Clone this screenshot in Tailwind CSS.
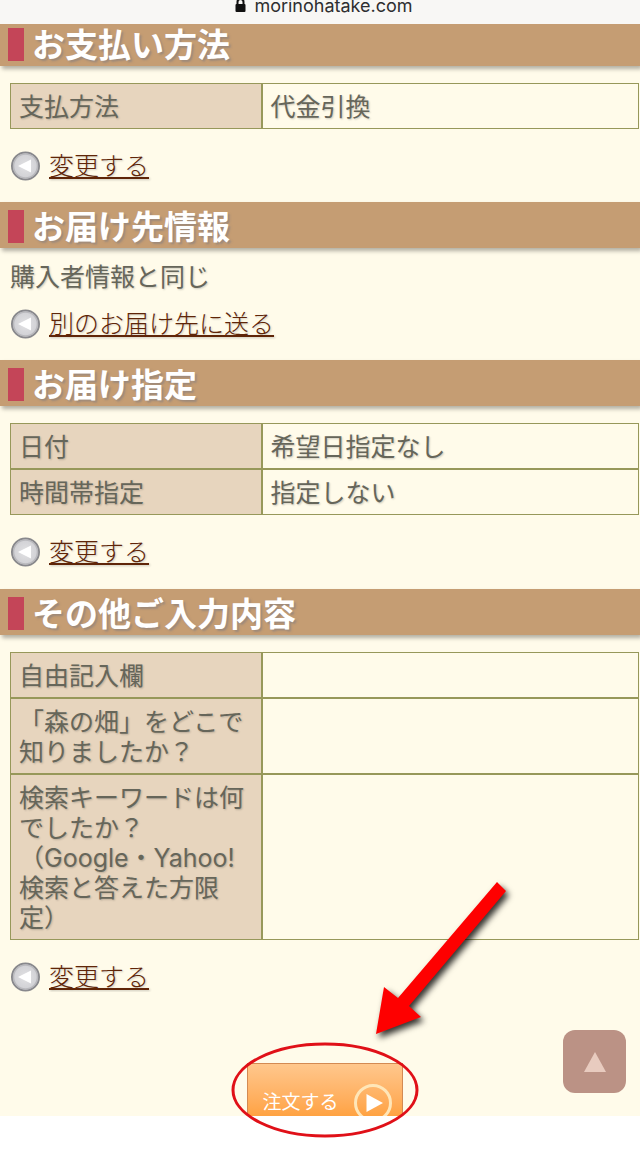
<!DOCTYPE html>
<html lang="ja">
<head>
  <meta charset="UTF-8">
  <meta name="viewport" content="width=device-width, initial-scale=1.0">
  <title>ご注文内容の確認 | 森の畑</title>
  <script src="https://cdn.jsdelivr.net/npm/@tailwindcss/browser@4"></script>
</head>
<body class="min-h-screen bg-white font-['Inter','Noto_Sans_CJK_JP',sans-serif]">
  <!-- shared icon -->
  <svg class="absolute size-0">
    <defs>
      <radialGradient id="disc" cx="50%" cy="50%" r="50%">
        <stop offset="0" stop-color="#e2e2e4"/>
        <stop offset="1" stop-color="#cfcfd3"/>
      </radialGradient>
      <symbol id="back" viewBox="0 0 30 30">
        <circle cx="15.500" cy="15" r="13.500" fill="url(#disc)" stroke="#88888c" stroke-width="2"/>
        <circle cx="15.500" cy="15" r="12" fill="none" stroke="#b9b9bd" stroke-width="1.500"/>
        <path d="M8 15L21 8.500V21.500Z" fill="#fff"/>
      </symbol>
    </defs>
  </svg>

  <header class="relative z-10 flex h-6 items-end justify-center gap-2 overflow-hidden bg-[#f8f7f5] pb-[6px] pl-2 text-[#2e2e30]">
    <svg class="mb-[6px] h-[14px] w-[11px] shrink-0" viewBox="0 0 11 14">
      <path d="M2.500 7V4a3 3 0 0 1 6 0v3" fill="none" stroke="#111" stroke-width="2"/>
      <rect x="0.500" y="6" width="10" height="8" rx="1" fill="#111"/>
    </svg>
    <span class="text-[18px] leading-6">morinohatake.com</span>
  </header>

  <main class="overflow-hidden bg-[#fffbea] text-[25px] leading-[30px] text-[#66665a] text-shadow-[1px_1px_2px_rgb(0_0_0/0.2)]">
    <section class="-mt-1">
      <h2 class="flex h-[46px] items-center gap-2 bg-[#c59d73] pt-0.5 pl-2 text-[33px] font-bold text-white shadow-[2px_3px_4px_rgb(0_0_0/0.3)] text-shadow-[2px_2px_2px_rgb(120_120_130/0.5)]">
        <span class="h-[33px] w-4 bg-[#c44558]"></span>
        <span class="pt-0.5">お支払い方法</span>
      </h2>
      <div class="pr-px pl-[10px]">
        <table class="mt-[17px] w-full table-fixed border-separate border-spacing-0 text-left">
          <tr>
            <th class="w-2/5 border border-[#97985a] bg-[#e7d5be] px-2 pt-2 pb-1.5 font-normal">支払方法</th>
            <td class="border border-[#97985a] px-2 pt-2 pb-1.5">代金引換</td>
          </tr>
        </table>
        <p class="flex items-center gap-[9px] pt-[22px] pb-[21px]">
          <svg class="size-[30px]"><use href="#back"/></svg>
          <a href="#" class="font-light text-[#5f2508] underline decoration-2 underline-offset-2">変更する</a>
        </p>
      </div>
    </section>

    <section>
      <h2 class="flex h-[46px] items-center gap-2 bg-[#c59d73] pt-0.5 pl-2 text-[33px] font-bold text-white shadow-[2px_3px_4px_rgb(0_0_0/0.3)] text-shadow-[2px_2px_2px_rgb(120_120_130/0.5)]">
        <span class="h-[33px] w-4 bg-[#c44558]"></span>
        <span class="pt-0.5">お届け先情報</span>
      </h2>
      <div class="pr-px pl-[10px]">
        <p class="pt-[14px]">購入者情報と同じ</p>
        <p class="flex items-center gap-[9px] pt-[17px] pb-[21px]">
          <svg class="size-[30px]"><use href="#back"/></svg>
          <a href="#" class="font-light text-[#5f2508] underline decoration-2 underline-offset-2">別のお届け先に送る</a>
        </p>
      </div>
    </section>

    <section>
      <h2 class="flex h-[46px] items-center gap-2 bg-[#c59d73] pt-0.5 pl-2 text-[33px] font-bold text-white shadow-[2px_3px_4px_rgb(0_0_0/0.3)] text-shadow-[2px_2px_2px_rgb(120_120_130/0.5)]">
        <span class="h-[33px] w-4 bg-[#c44558]"></span>
        <span class="pt-0.5">お届け指定</span>
      </h2>
      <div class="pr-px pl-[10px]">
        <table class="mt-[17px] w-full table-fixed border-separate border-spacing-0 text-left">
          <tr>
            <th class="w-2/5 border border-[#97985a] bg-[#e7d5be] px-2 pt-2 pb-1.5 font-normal">日付</th>
            <td class="border border-[#97985a] px-2 pt-2 pb-1.5">希望日指定なし</td>
          </tr>
          <tr>
            <th class="border border-[#97985a] bg-[#e7d5be] px-2 pt-2 pb-1.5 font-normal">時間帯指定</th>
            <td class="border border-[#97985a] px-2 pt-2 pb-1.5">指定しない</td>
          </tr>
        </table>
        <p class="flex items-center gap-[9px] py-[22px]">
          <svg class="size-[30px]"><use href="#back"/></svg>
          <a href="#" class="font-light text-[#5f2508] underline decoration-2 underline-offset-2">変更する</a>
        </p>
      </div>
    </section>

    <section>
      <h2 class="flex h-[46px] items-center gap-2 bg-[#c59d73] pt-0.5 pl-2 text-[33px] font-bold text-white shadow-[2px_3px_4px_rgb(0_0_0/0.3)] text-shadow-[2px_2px_2px_rgb(120_120_130/0.5)]">
        <span class="h-[33px] w-4 bg-[#c44558]"></span>
        <span class="pt-0.5">その他ご入力内容</span>
      </h2>
      <div class="pr-px pl-[10px]">
        <table class="mt-[17px] w-full table-fixed border-separate border-spacing-0 text-left">
          <tr>
            <th class="w-2/5 border border-[#97985a] bg-[#e7d5be] px-2 pt-2 pb-1.5 font-normal">自由記入欄</th>
            <td class="border border-[#97985a] px-2 pt-2 pb-1.5"></td>
          </tr>
          <tr>
            <th class="border border-[#97985a] bg-[#e7d5be] px-2 pt-2 pb-1.5 font-normal">「森の畑」をどこで知りましたか？</th>
            <td class="border border-[#97985a] px-2 pt-2 pb-1.5"></td>
          </tr>
          <tr>
            <th class="border border-[#97985a] bg-[#e7d5be] px-2 pt-2 pb-1.5 font-normal">検索キーワードは何でしたか？<br>（Google・Yahoo!検索と答えた方限定）</th>
            <td class="border border-[#97985a] px-2 pt-2 pb-1.5"></td>
          </tr>
        </table>
        <p class="flex items-center gap-[9px] pt-[22px]">
          <svg class="size-[30px]"><use href="#back"/></svg>
          <a href="#" class="font-light text-[#5f2508] underline decoration-2 underline-offset-2">変更する</a>
        </p>
      </div>
    </section>
  </main>

  <!-- order button, cut off by the bottom of the screen -->
  <div class="relative bg-[#fffbea] pt-[71px] pr-px pl-[10px]">
    <div class="relative mx-auto h-[53px] w-[156px]">
      <div class="h-full overflow-hidden">
        <button type="button" class="flex h-20 w-full items-center justify-between border border-[#d38a52] bg-linear-to-b from-[#ffc78c] to-[#ff9510] to-90% pr-[10px] pl-[15px] text-[19px] text-white">
          注文する
          <svg class="size-[38px]" viewBox="0 0 38 38">
            <circle cx="19" cy="19" r="17.500" fill="none" stroke="#ffe6b8" stroke-width="3"/>
            <path d="M12.500 10L29 19L12.500 28Z" fill="#fff"/>
          </svg>
        </button>
      </div>
      <!-- hand-drawn marks over the button -->
      <svg class="pointer-events-none absolute -top-[193px] -left-[27px] h-[280px] w-[300px]" viewBox="220 870 300 280">
        <ellipse cx="325" cy="1090" rx="92" ry="46" fill="none" stroke="#e01018" stroke-width="3"/>
        <path class="drop-shadow-[3px_4px_3px_rgb(0_0_0/0.8)]" d="M497 882L506 891L409 1006L421 1017L376 1034L384 987L398 998Z" fill="#fe0000"/>
      </svg>
    </div>
    <button type="button" aria-label="ページの先頭へ" class="absolute right-[14px] bottom-[23px] flex size-[63px] items-center justify-center rounded-xl bg-[#bb9285]">
      <svg class="h-5 w-[22px]" viewBox="0 0 22 20"><path d="M11 0L22 20H0Z" fill="#e8cbbf"/></svg>
    </button>
  </div>
</body>
</html>
